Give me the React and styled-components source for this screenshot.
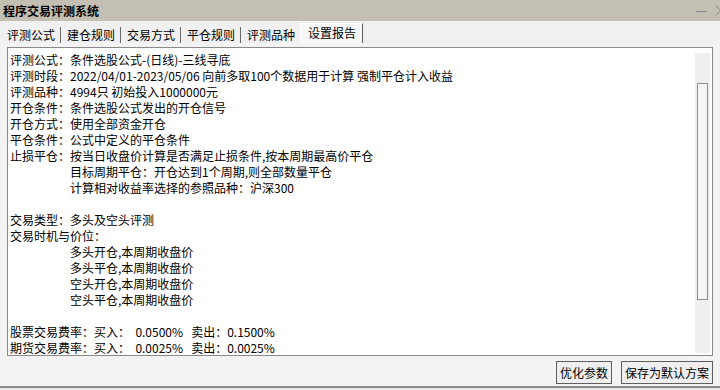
import React from "react";
import styled, { createGlobalStyle } from "styled-components";

const GlobalStyle = createGlobalStyle`
  html, body {
    margin: 0;
    padding: 0;
    background: #f0f0f0;
    overflow: hidden;
  }
  body {
    font-family: "Noto Sans CJK SC", "Noto Sans", sans-serif;
    font-size: 12px;
    color: #000;
  }
`;

const Window = styled.div`
  width: 720px;
  height: 390px;
  display: flex;
  flex-direction: column;
  background: #f0f0f0;
  overflow: hidden;
`;

const TitleBar = styled.div`
  height: 21px;
  flex: none;
  display: flex;
  align-items: center;
  padding-left: 3px;
  background: #c3bfb3;
`;

const Title = styled.div`
  font-weight: 700;
  font-size: 12px;
  line-height: 21px;
`;

const Controls = styled.div`
  margin-left: auto;
  display: flex;
  align-items: center;
  gap: 8px;
  margin-right: -6px;
`;

const TabBar = styled.div`
  height: 22px;
  flex: none;
  display: flex;
  align-items: flex-end;
  padding-left: 1px;
`;

const Tab = styled.div`
  box-sizing: border-box;
  height: ${(p) => (p.$active ? "20px" : "16px")};
  width: ${(p) => (p.$active ? "63px" : "60px")};
  padding-left: ${(p) => (p.$active ? "7px" : "6px")};
  line-height: ${(p) => (p.$active ? "17px" : "15px")};
  white-space: nowrap;
  background: ${(p) => (p.$active ? "#f7f7f7" : "transparent")};
  border-right: ${(p) =>
    p.$active ? "1px solid #5c5c5c" : p.$sep ? "1px solid #6a6a6a" : "1px solid transparent"};
  border-top: ${(p) => (p.$active ? "1px solid #ffffff" : "none")};
  border-left: ${(p) => (p.$active ? "1px solid #ffffff" : "none")};
  margin-left: ${(p) => (p.$active ? "-1px" : "0")};
`;

const Panel = styled.div`
  flex: 1;
  display: flex;
  flex-direction: column;
  background: #f3f3f3;
  border-bottom: 2px solid #8a8a8a;
`;

const ContentBox = styled.div`
  margin: 4px 7px 0 7px;
  height: 309px;
  box-sizing: border-box;
  border: 1px solid #8a8a8a;
  background: #ffffff;
  display: flex;
`;

const Report = styled.div`
  flex: 1;
  padding: 4px 2px 0 2px;
`;

const Line = styled.div`
  height: 16px;
  line-height: 16px;
  white-space: pre;
  padding-left: ${(p) => (p.$indent ? "60px" : "0")};
`;

const ScrollTrack = styled.div`
  width: 15px;
  margin: 5px 2px 2px 0;
  background: #efefef;
  display: flex;
  flex-direction: column;
`;

const ScrollThumb = styled.div`
  margin: 30px 0 0 2px;
  width: 11px;
  height: 217px;
  box-sizing: border-box;
  border: 1px solid #8c8c8c;
  background: #f5f5f5;
`;

const ButtonRow = styled.div`
  display: flex;
  justify-content: flex-end;
  gap: 9px;
  margin-top: 5px;
  padding-right: 7px;
`;

const Button = styled.div`
  box-sizing: border-box;
  height: 23px;
  width: ${(p) => p.$w}px;
  border: 1px solid #5e5e5e;
  background: #efefef;
  display: flex;
  align-items: center;
  justify-content: center;
  font-size: 12px;
  line-height: 16px;
`;

const BottomEdge = styled.div`
  height: 2px;
  background: #e6e6e6;
  flex: none;
`;

const lines = [
  { t: "评测公式：条件选股公式-(日线)-三线寻底" },
  { t: "评测时段：2022/04/01-2023/05/06 向前多取100个数据用于计算 强制平仓计入收益" },
  { t: "评测品种：4994只 初始投入1000000元" },
  { t: "开仓条件：条件选股公式发出的开仓信号" },
  { t: "开仓方式：使用全部资金开仓" },
  { t: "平仓条件：公式中定义的平仓条件" },
  { t: "止损平仓：按当日收盘价计算是否满足止损条件,按本周期最高价平仓" },
  { t: "目标周期平仓：开仓达到1个周期,则全部数量平仓", i: true },
  { t: "计算相对收益率选择的参照品种：沪深300", i: true },
  { t: "" },
  { t: "交易类型：多头及空头评测" },
  { t: "交易时机与价位：" },
  { t: "多头开仓,本周期收盘价", i: true },
  { t: "多头平仓,本周期收盘价", i: true },
  { t: "空头开仓,本周期收盘价", i: true },
  { t: "空头平仓,本周期收盘价", i: true },
  { t: "" },
  { t: "股票交易费率：买入：  0.0500%   卖出：0.1500%" },
  { t: "期货交易费率：买入：  0.0025%   卖出：0.0025%" },
];

const tabs = ["评测公式", "建仓规则", "交易方式", "平仓规则", "评测品种", "设置报告"];

export default function App() {
  return (
    <>
      <GlobalStyle />
      <Window>
        <TitleBar>
          <Title>程序交易评测系统</Title>
          <Controls>
            <svg width="11" height="10" viewBox="0 0 11 10">
              <line x1="0" y1="5.5" x2="11" y2="5.5" stroke="#8a8a8a" strokeWidth="1" />
            </svg>
            <svg width="11" height="11" viewBox="0 0 11 11">
              <line x1="0.5" y1="0.5" x2="10.5" y2="10.5" stroke="#8a8a8a" strokeWidth="1" />
              <line x1="10.5" y1="0.5" x2="0.5" y2="10.5" stroke="#8a8a8a" strokeWidth="1" />
            </svg>
          </Controls>
        </TitleBar>
        <TabBar>
          {tabs.map((t, idx) => (
            <Tab key={t} $active={idx === 5} $sep={idx < 4}>
              {t}
            </Tab>
          ))}
        </TabBar>
        <Panel>
          <ContentBox>
            <Report>
              {lines.map((l, idx) => (
                <Line key={idx} $indent={l.i}>
                  {l.t}
                </Line>
              ))}
            </Report>
            <ScrollTrack>
              <ScrollThumb />
            </ScrollTrack>
          </ContentBox>
          <ButtonRow>
            <Button $w={56}>优化参数</Button>
            <Button $w={92}>保存为默认方案</Button>
          </ButtonRow>
        </Panel>
        <BottomEdge />
      </Window>
    </>
  );
}
